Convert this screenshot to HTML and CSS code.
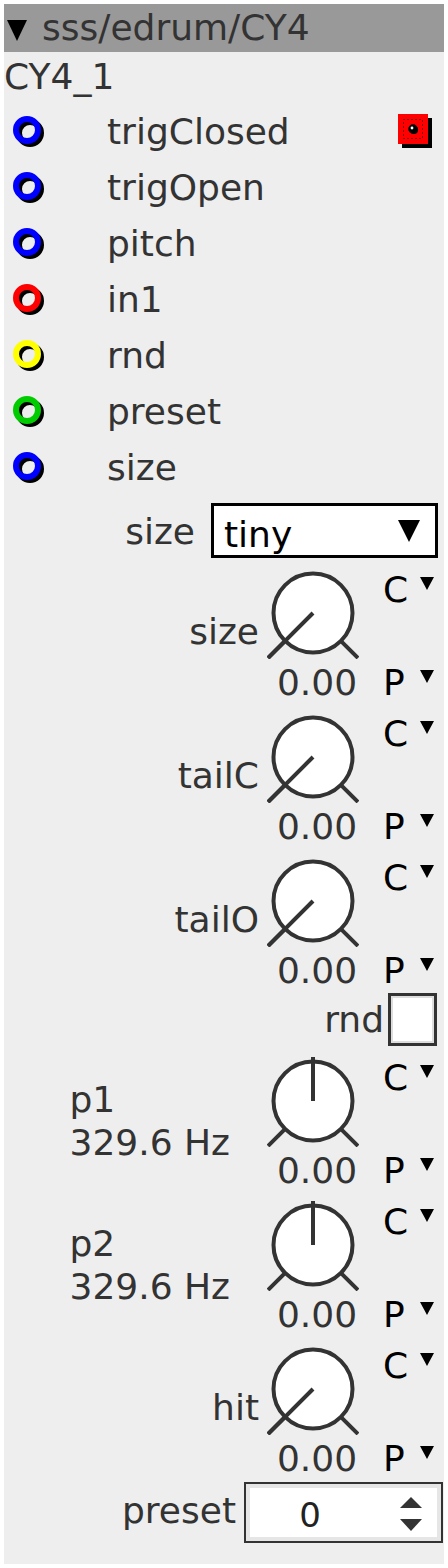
FILE: index.html
```html
<!DOCTYPE html>
<html>
<head>
<meta charset="utf-8">
<link rel="stylesheet" href="styles.css">
</head>
<body>
<div class="module">
  <div class="title"><span class="title-tri"></span><span>sss/edrum/CY4</span></div>
  <div class="instance">CY4_1</div>

  <div class="ports">
    <div class="port">
      <svg class="socket" viewBox="0 0 34 34"><circle cx="19" cy="19" r="11" class="shadow"/><circle cx="16" cy="16" r="11" class="ring blue"/></svg>
      <span class="port-name">trigClosed</span>
      <svg class="out" viewBox="0 0 36 36"><rect x="5" y="5" width="30" height="30" fill="#000"/><rect x="1" y="1" width="30" height="30" fill="#ff0000"/><rect x="6.5" y="6.5" width="19" height="19" fill="none" stroke="#000" stroke-width="1" stroke-dasharray="1 3"/><circle cx="17" cy="17" r="4" fill="#000"/><circle cx="16" cy="16" r="3.5" fill="none" stroke="#000" stroke-width="2.5"/><circle cx="15" cy="15" r="1.4" fill="#fff"/></svg>
    </div>
    <div class="port">
      <svg class="socket" viewBox="0 0 34 34"><circle cx="19" cy="19" r="11" class="shadow"/><circle cx="16" cy="16" r="11" class="ring blue"/></svg>
      <span class="port-name">trigOpen</span>
    </div>
    <div class="port">
      <svg class="socket" viewBox="0 0 34 34"><circle cx="19" cy="19" r="11" class="shadow"/><circle cx="16" cy="16" r="11" class="ring blue"/></svg>
      <span class="port-name">pitch</span>
    </div>
    <div class="port">
      <svg class="socket" viewBox="0 0 34 34"><circle cx="19" cy="19" r="11" class="shadow"/><circle cx="16" cy="16" r="11" class="ring red"/></svg>
      <span class="port-name">in1</span>
    </div>
    <div class="port">
      <svg class="socket" viewBox="0 0 34 34"><circle cx="19" cy="19" r="11" class="shadow"/><circle cx="16" cy="16" r="11" class="ring yellow"/></svg>
      <span class="port-name">rnd</span>
    </div>
    <div class="port">
      <svg class="socket" viewBox="0 0 34 34"><circle cx="19" cy="19" r="11" class="shadow"/><circle cx="16" cy="16" r="11" class="ring green"/></svg>
      <span class="port-name">preset</span>
    </div>
    <div class="port">
      <svg class="socket" viewBox="0 0 34 34"><circle cx="19" cy="19" r="11" class="shadow"/><circle cx="16" cy="16" r="11" class="ring blue"/></svg>
      <span class="port-name">size</span>
    </div>
  </div>

  <div class="select-row">
    <span class="select-label">size</span>
    <div class="select"><span class="select-value">tiny</span><span class="select-arrow"></span></div>
  </div>

  <div class="knob-block">
    <span class="knob-label">size</span>
    <div class="knob-col">
      <svg class="knob" viewBox="0 0 92 92"><circle cx="46" cy="46" r="39.5"/><line x1="17.7" y1="74.3" x2="1" y2="91"/><line x1="74.3" y1="74.3" x2="91" y2="91"/><line x1="46" y1="46" x2="1" y2="91"/></svg>
      <span class="knob-value">0.00</span>
    </div>
    <div class="cp-col">
      <div class="cp"><span class="cp-letter">C</span><span class="cp-tri"></span></div>
      <div class="cp"><span class="cp-letter">P</span><span class="cp-tri"></span></div>
    </div>
  </div>

  <div class="knob-block">
    <span class="knob-label">tailC</span>
    <div class="knob-col">
      <svg class="knob" viewBox="0 0 92 92"><circle cx="46" cy="46" r="39.5"/><line x1="17.7" y1="74.3" x2="1" y2="91"/><line x1="74.3" y1="74.3" x2="91" y2="91"/><line x1="46" y1="46" x2="1" y2="91"/></svg>
      <span class="knob-value">0.00</span>
    </div>
    <div class="cp-col">
      <div class="cp"><span class="cp-letter">C</span><span class="cp-tri"></span></div>
      <div class="cp"><span class="cp-letter">P</span><span class="cp-tri"></span></div>
    </div>
  </div>

  <div class="knob-block">
    <span class="knob-label">tailO</span>
    <div class="knob-col">
      <svg class="knob" viewBox="0 0 92 92"><circle cx="46" cy="46" r="39.5"/><line x1="17.7" y1="74.3" x2="1" y2="91"/><line x1="74.3" y1="74.3" x2="91" y2="91"/><line x1="46" y1="46" x2="1" y2="91"/></svg>
      <span class="knob-value">0.00</span>
    </div>
    <div class="cp-col">
      <div class="cp"><span class="cp-letter">C</span><span class="cp-tri"></span></div>
      <div class="cp"><span class="cp-letter">P</span><span class="cp-tri"></span></div>
    </div>
  </div>

  <div class="check-row">
    <span class="check-label">rnd</span>
    <span class="checkbox"></span>
  </div>

  <div class="knob-block">
    <span class="knob-label two-line">p1<br>329.6 Hz</span>
    <div class="knob-col">
      <svg class="knob" viewBox="0 0 92 92"><circle cx="46" cy="46" r="39.5"/><line x1="17.7" y1="74.3" x2="1" y2="91"/><line x1="74.3" y1="74.3" x2="91" y2="91"/><line x1="46" y1="46" x2="46" y2="2"/></svg>
      <span class="knob-value">0.00</span>
    </div>
    <div class="cp-col">
      <div class="cp"><span class="cp-letter">C</span><span class="cp-tri"></span></div>
      <div class="cp"><span class="cp-letter">P</span><span class="cp-tri"></span></div>
    </div>
  </div>

  <div class="knob-block">
    <span class="knob-label two-line">p2<br>329.6 Hz</span>
    <div class="knob-col">
      <svg class="knob" viewBox="0 0 92 92"><circle cx="46" cy="46" r="39.5"/><line x1="17.7" y1="74.3" x2="1" y2="91"/><line x1="74.3" y1="74.3" x2="91" y2="91"/><line x1="46" y1="46" x2="46" y2="2"/></svg>
      <span class="knob-value">0.00</span>
    </div>
    <div class="cp-col">
      <div class="cp"><span class="cp-letter">C</span><span class="cp-tri"></span></div>
      <div class="cp"><span class="cp-letter">P</span><span class="cp-tri"></span></div>
    </div>
  </div>

  <div class="knob-block">
    <span class="knob-label">hit</span>
    <div class="knob-col">
      <svg class="knob" viewBox="0 0 92 92"><circle cx="46" cy="46" r="39.5"/><line x1="17.7" y1="74.3" x2="1" y2="91"/><line x1="74.3" y1="74.3" x2="91" y2="91"/><line x1="46" y1="46" x2="1" y2="91"/></svg>
      <span class="knob-value">0.00</span>
    </div>
    <div class="cp-col">
      <div class="cp"><span class="cp-letter">C</span><span class="cp-tri"></span></div>
      <div class="cp"><span class="cp-letter">P</span><span class="cp-tri"></span></div>
    </div>
  </div>

  <div class="preset-row">
    <span class="preset-label">preset</span>
    <div class="spinbox">
      <span class="spin-value">0</span>
      <span class="spin-arrows"><span class="spin-up"></span><span class="spin-down"></span></span>
    </div>
  </div>
</div>
</body>
</html>
```

FILE: styles.css
```css
html, body {
  margin: 0;
  padding: 0;
  background: #ffffff;
}

body {
  padding: 4px;
  font-family: "DejaVu Sans", "Noto Sans", sans-serif;
  color: #333333;
}

.module {
  width: 440px;
  height: 1560px;
  background: #eeeeee;
  display: flex;
  flex-direction: column;
  overflow: hidden;
}

/* title bar */
.title {
  height: 48px;
  background: #999999;
  display: flex;
  align-items: center;
  font-size: 36px;
  line-height: 48px;
  color: #333333;
}

.title-tri {
  width: 0;
  height: 0;
  margin-left: 3px;
  margin-right: 15px;
  margin-top: 4px;
  border-left: 10.5px solid transparent;
  border-right: 10.5px solid transparent;
  border-top: 21px solid #000000;
}

.instance {
  height: 50px;
  font-size: 36px;
  line-height: 50px;
}

/* ports */
.ports {
  display: flex;
  flex-direction: column;
}

.port {
  height: 56px;
  display: flex;
  align-items: center;
  font-size: 36px;
}

.socket {
  width: 34px;
  height: 34px;
  margin-left: 7px;
  margin-top: 2px;
}

.socket .shadow {
  fill: none;
  stroke: #000000;
  stroke-width: 6;
}

.socket .ring {
  fill: none;
  stroke-width: 6;
}

.ring.blue { stroke: #0000ff; }
.ring.red { stroke: #ff0000; }
.ring.yellow { stroke: #ffff00; }
.ring.green { stroke: #00cc00; }

.port-name {
  margin-left: 62px;
  line-height: 42px;
  margin-top: 4px;
}

.out {
  width: 36px;
  height: 36px;
  margin-left: auto;
  margin-right: 11px;
  margin-top: 2px;
}

/* size select */
.select-row {
  height: 69px;
  display: flex;
  justify-content: flex-end;
  align-items: flex-start;
  padding-right: 6px;
  box-sizing: border-box;
}

.select-label {
  font-size: 36px;
  line-height: 42px;
  margin-top: 17px;
  margin-right: 16px;
}

.select {
  width: 227px;
  height: 55px;
  margin-top: 9px;
  box-sizing: border-box;
  border: 3px solid #000000;
  background: #ffffff;
  display: flex;
  align-items: flex-start;
  padding-left: 10px;
  padding-right: 15px;
}

.select-value {
  font-size: 36px;
  line-height: 42px;
  margin-top: 8px;
  color: #000000;
}

.select-arrow {
  width: 0;
  height: 0;
  margin-left: auto;
  margin-top: 14px;
  border-left: 11.5px solid transparent;
  border-right: 11.5px solid transparent;
  border-top: 22px solid #000000;
}

/* knob blocks */
.knob-block {
  height: 144px;
  display: flex;
  justify-content: flex-end;
  align-items: flex-start;
  padding-right: 10px;
  box-sizing: border-box;
}

.knob-label {
  font-size: 36px;
  line-height: 42px;
  margin-top: 48px;
  margin-right: 8px;
}

.knob-label.two-line {
  line-height: 43px;
  margin-top: 27px;
  margin-right: 37px;
}

.knob-col {
  width: 92px;
  display: flex;
  flex-direction: column;
}

.knob {
  width: 92px;
  height: 92px;
  margin-top: 4px;
}

.knob circle {
  fill: #ffffff;
  stroke: #333333;
  stroke-width: 4;
}

.knob line {
  stroke: #333333;
  stroke-width: 4;
}

.knob-value {
  font-size: 36px;
  line-height: 42px;
  margin-top: 3px;
  margin-left: -4px;
  margin-right: -12px;
  text-align: center;
  white-space: nowrap;
}

.cp-col {
  height: 144px;
  box-sizing: border-box;
  padding-top: 7px;
  padding-bottom: 4px;
  margin-left: 24px;
  display: flex;
  flex-direction: column;
  justify-content: space-between;
}

.cp {
  display: flex;
  align-items: flex-start;
  font-size: 36px;
  line-height: 40px;
  color: #000000;
}

.cp-letter {
  width: 25px;
}

.cp-tri {
  width: 0;
  height: 0;
  margin-left: 12px;
  margin-top: 7px;
  border-left: 7px solid transparent;
  border-right: 7px solid transparent;
  border-top: 13px solid #000000;
}

/* rnd checkbox */
.check-row {
  height: 56px;
  display: flex;
  justify-content: flex-end;
  align-items: flex-start;
  padding-right: 7px;
  box-sizing: border-box;
}

.check-label {
  font-size: 36px;
  line-height: 42px;
  margin-top: 4px;
  margin-right: 4px;
}

.checkbox {
  width: 49px;
  height: 53px;
  margin-top: -2px;
  box-sizing: border-box;
  border: 3px solid #333333;
  background: #ffffff;
  box-shadow: inset 0 0 0 2px #dddddd;
}

/* preset spinbox */
.preset-row {
  flex: 1;
  display: flex;
  justify-content: flex-end;
  align-items: flex-start;
  padding-right: 1px;
}

.preset-label {
  font-size: 36px;
  line-height: 42px;
  margin-top: 7px;
  margin-right: 8px;
}

.spinbox {
  width: 199px;
  height: 61px;
  margin-top: -1px;
  box-sizing: border-box;
  border: 2px solid #333333;
  background: #ffffff;
  box-shadow: inset 0 0 0 4px #e6e6e6;
  display: flex;
  align-items: flex-start;
}

.spin-value {
  width: 128px;
  text-align: center;
  font-size: 34px;
  line-height: 42px;
  margin-top: 10px;
  color: #222222;
}

.spin-arrows {
  margin-left: 26px;
  margin-top: 13px;
  display: flex;
  flex-direction: column;
}

.spin-up {
  width: 0;
  height: 0;
  border-left: 11.5px solid transparent;
  border-right: 11.5px solid transparent;
  border-bottom: 11px solid #333333;
}

.spin-down {
  width: 0;
  height: 0;
  margin-top: 11px;
  border-left: 11.5px solid transparent;
  border-right: 11.5px solid transparent;
  border-top: 12px solid #333333;
}
```
